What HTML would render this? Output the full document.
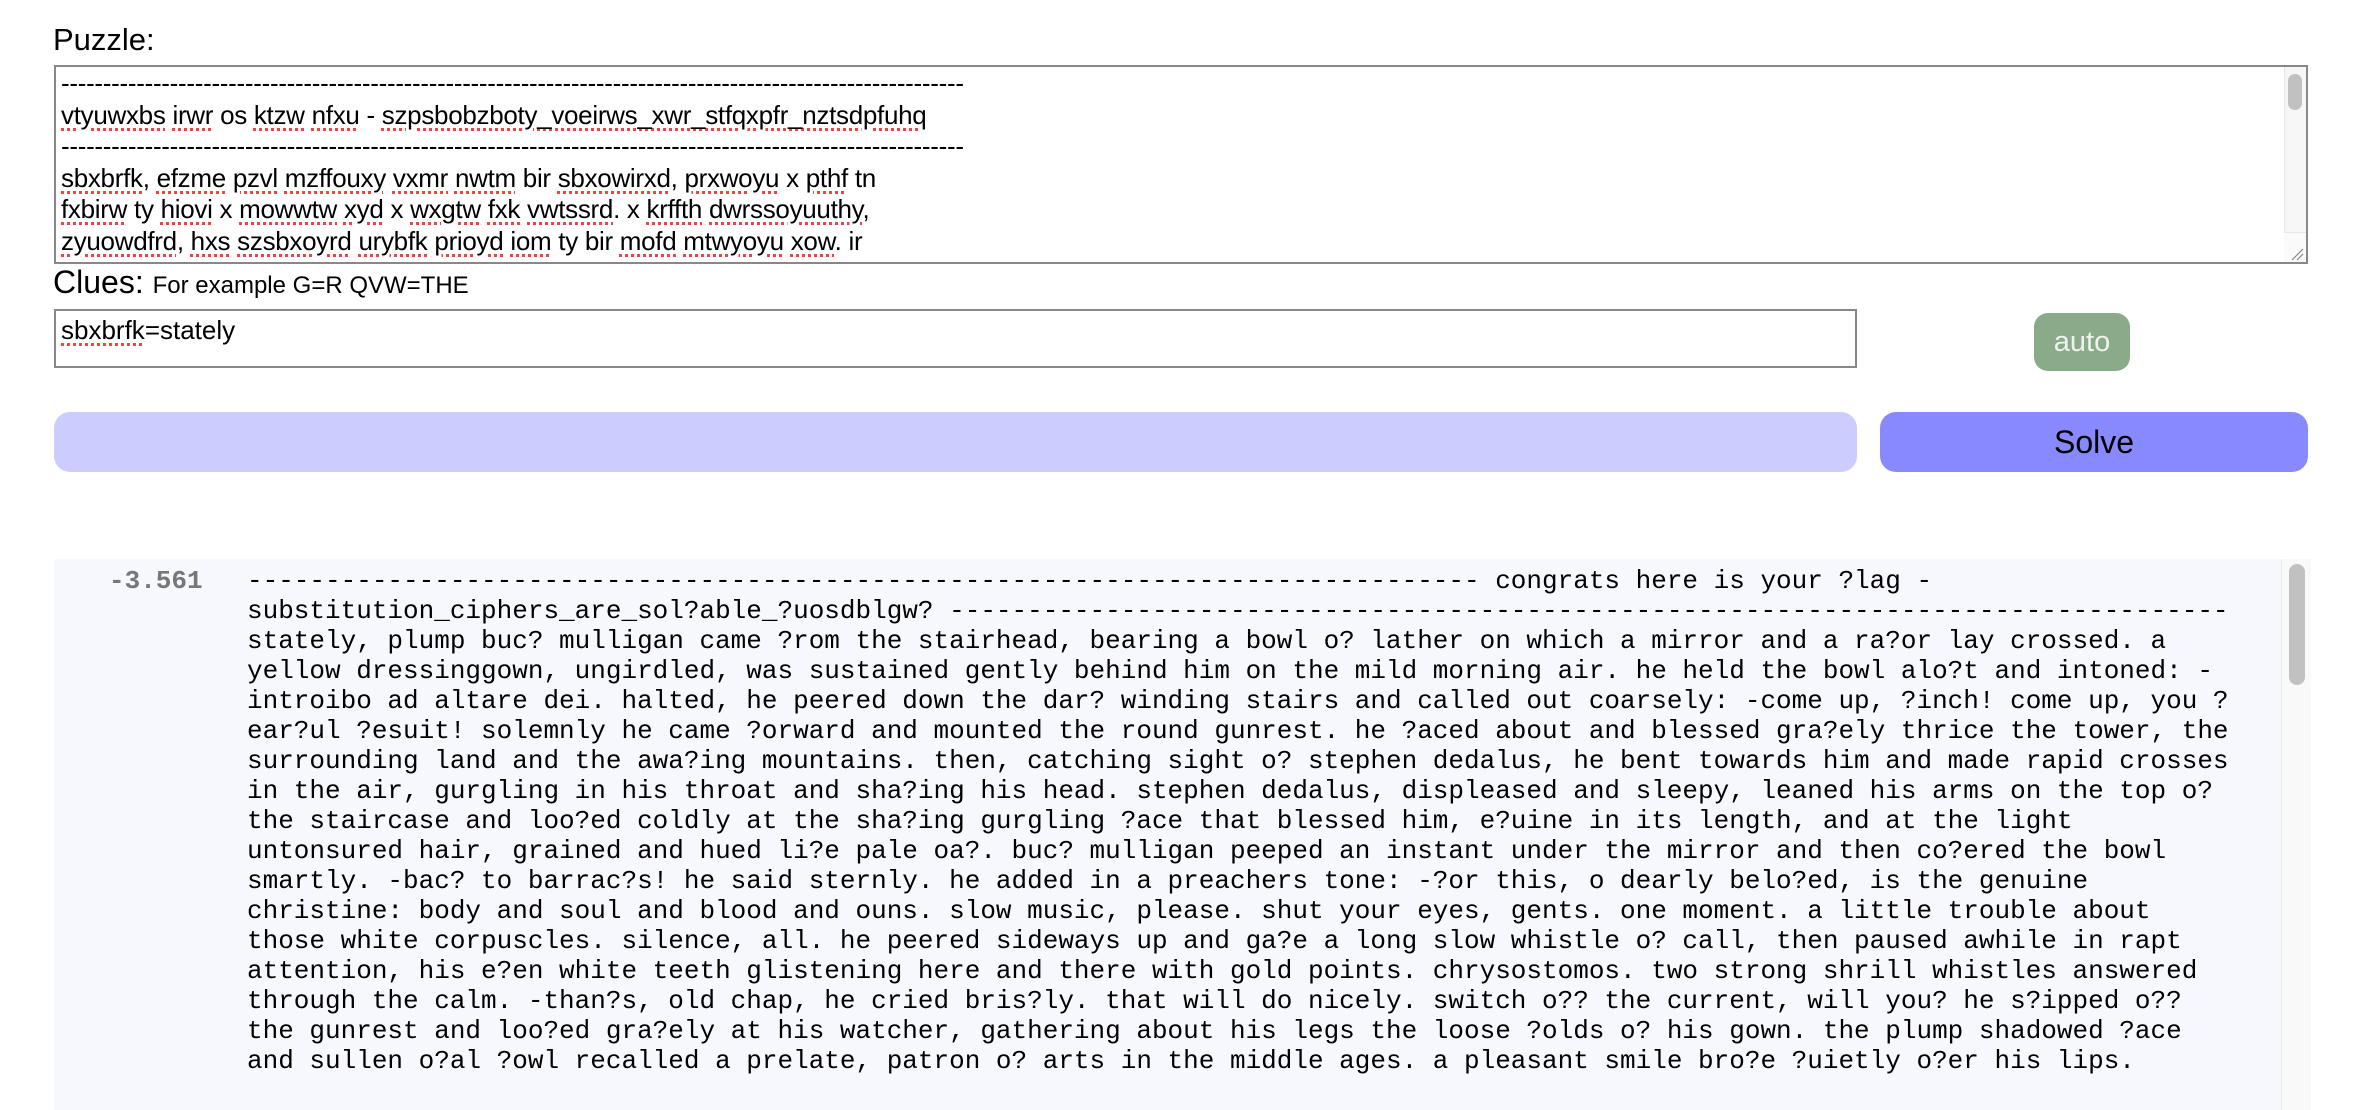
<!DOCTYPE html>
<html><head><meta charset="utf-8"><style>
*{margin:0;padding:0;box-sizing:border-box}
body{width:2380px;height:1110px;background:#fff;position:relative;overflow:hidden;font-family:"Liberation Sans",Arial,sans-serif;color:#000}
.a{position:absolute}
.sp{text-decoration:underline dotted #e44;text-decoration-thickness:3px;text-underline-offset:4px}
#ta{left:54px;top:65px;width:2254px;height:199px;border:2px solid #888;overflow:hidden}
#ta .t{position:absolute;left:5px;top:1px;font-size:26px;line-height:31.5px;white-space:pre;letter-spacing:-0.3px}
#out{left:54px;top:559px;width:2257px;height:551px;background:#f7f8fd}
#out pre{position:absolute;left:193px;top:7px;font-family:"Liberation Mono","Courier New",monospace;font-size:26px;line-height:30px;color:#000}
</style></head><body>
<div class="a" style="left:53px;top:22px;font-size:31px">Puzzle:</div>
<div id="ta" class="a"><div class="t">------------------------------------------------------------------------------------------------------------
<span class="sp">vtyuwxbs</span> <span class="sp">irwr</span> os <span class="sp">ktzw</span> <span class="sp">nfxu</span> - <span class="sp">szpsbobzboty_voeirws_xwr_stfqxpfr_nztsdpfuhq</span>
------------------------------------------------------------------------------------------------------------
<span class="sp">sbxbrfk</span>, <span class="sp">efzme</span> <span class="sp">pzvl</span> <span class="sp">mzffouxy</span> <span class="sp">vxmr</span> <span class="sp">nwtm</span> bir <span class="sp">sbxowirxd</span>, <span class="sp">prxwoyu</span> x <span class="sp">pthf</span> tn
<span class="sp">fxbirw</span> ty <span class="sp">hiovi</span> x <span class="sp">mowwtw</span> <span class="sp">xyd</span> x <span class="sp">wxgtw</span> <span class="sp">fxk</span> <span class="sp">vwtssrd</span>. x <span class="sp">krffth</span> <span class="sp">dwrssoyuuthy</span>,
<span class="sp">zyuowdfrd</span>, <span class="sp">hxs</span> <span class="sp">szsbxoyrd</span> <span class="sp">urybfk</span> <span class="sp">prioyd</span> <span class="sp">iom</span> ty bir <span class="sp">mofd</span> <span class="sp">mtwyoyu</span> <span class="sp">xow</span>. ir</div>
<div class="a" style="right:0;top:0;width:22px;height:195px;background:#f7f7f7;border-left:1px solid #e6e6e6"></div>
<div class="a" style="right:4px;top:7px;width:14px;height:36px;background:#c1c1c1;border-radius:7px"></div>
<div class="a" style="right:0;bottom:0;width:22px;height:30px;border-top:1px solid #e6e6e6;background:#fafafa"><svg width="22" height="30"><path d="M8 27 L19 16 M13 27 L19 21" stroke="#888" stroke-width="1.2"/></svg></div>
</div>
<div class="a" style="left:53px;top:264px;font-size:32px">Clues: <span style="font-size:24px">For example G=R QVW=THE</span></div>
<div class="a" style="left:54px;top:309px;width:1803px;height:59px;border:2px solid #888"><div style="position:absolute;left:5px;top:4px;font-size:26px"><span class="sp">sbxbrfk</span>=stately</div></div>
<div class="a" style="left:2034px;top:313px;width:96px;height:58px;background:#8aab8a;border-radius:14px;color:#eef2ee;font-size:29px;text-align:center;line-height:58px">auto</div>
<div class="a" style="left:54px;top:412px;width:1803px;height:60px;background:#ccccff;border-radius:16px"></div>
<div class="a" style="left:1880px;top:412px;width:428px;height:60px;background:#8888ff;border-radius:16px;font-size:32px;text-align:center;line-height:60px">Solve</div>
<div id="out" class="a">
<div class="a" style="left:55px;top:7px;font-family:'Liberation Mono',monospace;font-size:26px;line-height:30px;color:#777;font-weight:bold">-3.561</div>
<pre>------------------------------------------------------------------------------- congrats here is your ?lag -
substitution_ciphers_are_sol?able_?uosdblgw? ----------------------------------------------------------------------------------
stately, plump buc? mulligan came ?rom the stairhead, bearing a bowl o? lather on which a mirror and a ra?or lay crossed. a
yellow dressinggown, ungirdled, was sustained gently behind him on the mild morning air. he held the bowl alo?t and intoned: -
introibo ad altare dei. halted, he peered down the dar? winding stairs and called out coarsely: -come up, ?inch! come up, you ?
ear?ul ?esuit! solemnly he came ?orward and mounted the round gunrest. he ?aced about and blessed gra?ely thrice the tower, the
surrounding land and the awa?ing mountains. then, catching sight o? stephen dedalus, he bent towards him and made rapid crosses
in the air, gurgling in his throat and sha?ing his head. stephen dedalus, displeased and sleepy, leaned his arms on the top o?
the staircase and loo?ed coldly at the sha?ing gurgling ?ace that blessed him, e?uine in its length, and at the light
untonsured hair, grained and hued li?e pale oa?. buc? mulligan peeped an instant under the mirror and then co?ered the bowl
smartly. -bac? to barrac?s! he said sternly. he added in a preachers tone: -?or this, o dearly belo?ed, is the genuine
christine: body and soul and blood and ouns. slow music, please. shut your eyes, gents. one moment. a little trouble about
those white corpuscles. silence, all. he peered sideways up and ga?e a long slow whistle o? call, then paused awhile in rapt
attention, his e?en white teeth glistening here and there with gold points. chrysostomos. two strong shrill whistles answered
through the calm. -than?s, old chap, he cried bris?ly. that will do nicely. switch o?? the current, will you? he s?ipped o??
the gunrest and loo?ed gra?ely at his watcher, gathering about his legs the loose ?olds o? his gown. the plump shadowed ?ace
and sullen o?al ?owl recalled a prelate, patron o? arts in the middle ages. a pleasant smile bro?e ?uietly o?er his lips.</pre>
<div class="a" style="left:2227px;top:0;width:30px;height:551px;background:#f9f9f9;border-left:1px solid #ececec"></div>
<div class="a" style="left:2235px;top:5px;width:16px;height:121px;background:#c1c1c1;border-radius:8px"></div>
</div>
</body></html>
